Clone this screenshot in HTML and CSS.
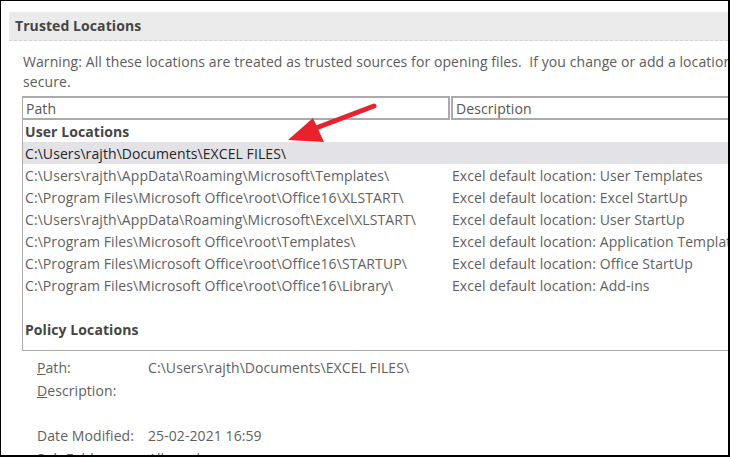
FILE: index.html
```html
<!DOCTYPE html>
<html>
<head>
<meta charset="utf-8">
<link rel="stylesheet" href="styles.css">
</head>
<body>
<div class="frame">
  <div class="section-title">Trusted Locations</div>
  <div class="warning">Warning: All these locations are treated as trusted sources for opening files.&nbsp; If you change or add a location, make sure that the new location is<br>secure.</div>
  <div class="list">
    <div class="list-head">
      <div class="hcell hcell-path">Path</div>
      <div class="hcell hcell-desc">Description</div>
    </div>
    <div class="group">User Locations</div>
    <div class="row selected"><span class="c-path">C:\Users\rajth\Documents\EXCEL FILES\</span><span class="c-desc"></span></div>
    <div class="row"><span class="c-path">C:\Users\rajth\AppData\Roaming\Microsoft\Templates\</span><span class="c-desc">Excel default location: User Templates</span></div>
    <div class="row"><span class="c-path">C:\Program Files\Microsoft Office\root\Office16\XLSTART\</span><span class="c-desc">Excel default location: Excel StartUp</span></div>
    <div class="row"><span class="c-path">C:\Users\rajth\AppData\Roaming\Microsoft\Excel\XLSTART\</span><span class="c-desc">Excel default location: User StartUp</span></div>
    <div class="row"><span class="c-path">C:\Program Files\Microsoft Office\root\Templates\</span><span class="c-desc">Excel default location: Application Templates</span></div>
    <div class="row"><span class="c-path">C:\Program Files\Microsoft Office\root\Office16\STARTUP\</span><span class="c-desc">Excel default location: Office StartUp</span></div>
    <div class="row"><span class="c-path">C:\Program Files\Microsoft Office\root\Office16\Library\</span><span class="c-desc">Excel default location: Add-ins</span></div>
    <div class="row"></div>
    <div class="group">Policy Locations</div>
  </div>
  <div class="details">
    <div class="drow"><span class="dlabel"><u>P</u>ath:</span><span class="dval">C:\Users\rajth\Documents\EXCEL FILES\</span></div>
    <div class="drow"><span class="dlabel"><u>D</u>escription:</span><span class="dval"></span></div>
    <div class="drow gap"><span class="dlabel">Date Modified:</span><span class="dval">25-02-2021 16:59</span></div>
    <div class="drow"><span class="dlabel">Sub Folders:</span><span class="dval">Allowed</span></div>
  </div>
  <svg class="arrow" width="100" height="50" viewBox="0 0 100 50">
    <line x1="93" y1="14" x2="35" y2="36" stroke="#e8212b" stroke-width="5" stroke-linecap="round"/>
    <polygon points="7,48 32,26 43,50" fill="#e8212b"/>
  </svg>
</div>
</body>
</html>
```

FILE: styles.css
```css
html, body {
  margin: 0;
  padding: 0;
  background: #fff;
}
.frame {
  position: relative;
  width: 730px;
  height: 457px;
  box-sizing: border-box;
  border: 1px solid #000;
  border-right-width: 2px;
  border-bottom-width: 2px;
  overflow: hidden;
  font-family: "Open Sans", "Noto Sans", sans-serif;
  font-size: 14px;
  letter-spacing: 0.08px;
  color: #5f5f5f;
}
.section-title {
  margin: 11px 0 0 8px;
  height: 28px;
  line-height: 28px;
  padding-left: 6px;
  background: #ebebeb;
  border-bottom: 1px dashed #d2d2d2;
  font-weight: bold;
  font-size: 14px;
  color: #454545;
}
.warning {
  margin: 11px 0 0 22px;
  line-height: 20px;
  white-space: nowrap;
  color: #5c5c5c;
}
.list {
  margin: 4px 0 0 21px;
  border-left: 1px solid #acacac;
  border-bottom: 1px solid #acacac;
  padding-bottom: 10px;
  width: 760px;
}
.list-head {
  display: flex;
  height: 24px;
}
.hcell {
  box-sizing: border-box;
  height: 24px;
  border: 2px solid #ababab;
  line-height: 21px;
  padding-left: 3px;
  color: #555;
}
.hcell-path {
  width: 427px;
  border-left: none;
}
.hcell-desc {
  flex: 1;
  margin-left: 1px;
}
.group {
  height: 22px;
  line-height: 24px;
  padding-left: 2px;
  font-weight: bold;
  color: #454545;
}
.row {
  display: flex;
  height: 22px;
  line-height: 24px;
  white-space: nowrap;
}
.row.selected {
  background: #e2e2e7;
  color: #262626;
}
.c-path {
  width: 427px;
  padding-left: 2px;
  box-sizing: border-box;
}
.c-desc {
  padding-left: 2px;
}
.details {
  margin: 5px 0 0 36px;
}
.drow {
  display: flex;
  height: 23px;
  line-height: 23px;
  white-space: nowrap;
}
.drow.gap {
  margin-top: 22px;
}
.dlabel {
  width: 111px;
}
.arrow {
  position: absolute;
  left: 280px;
  top: 91px;
}
```
